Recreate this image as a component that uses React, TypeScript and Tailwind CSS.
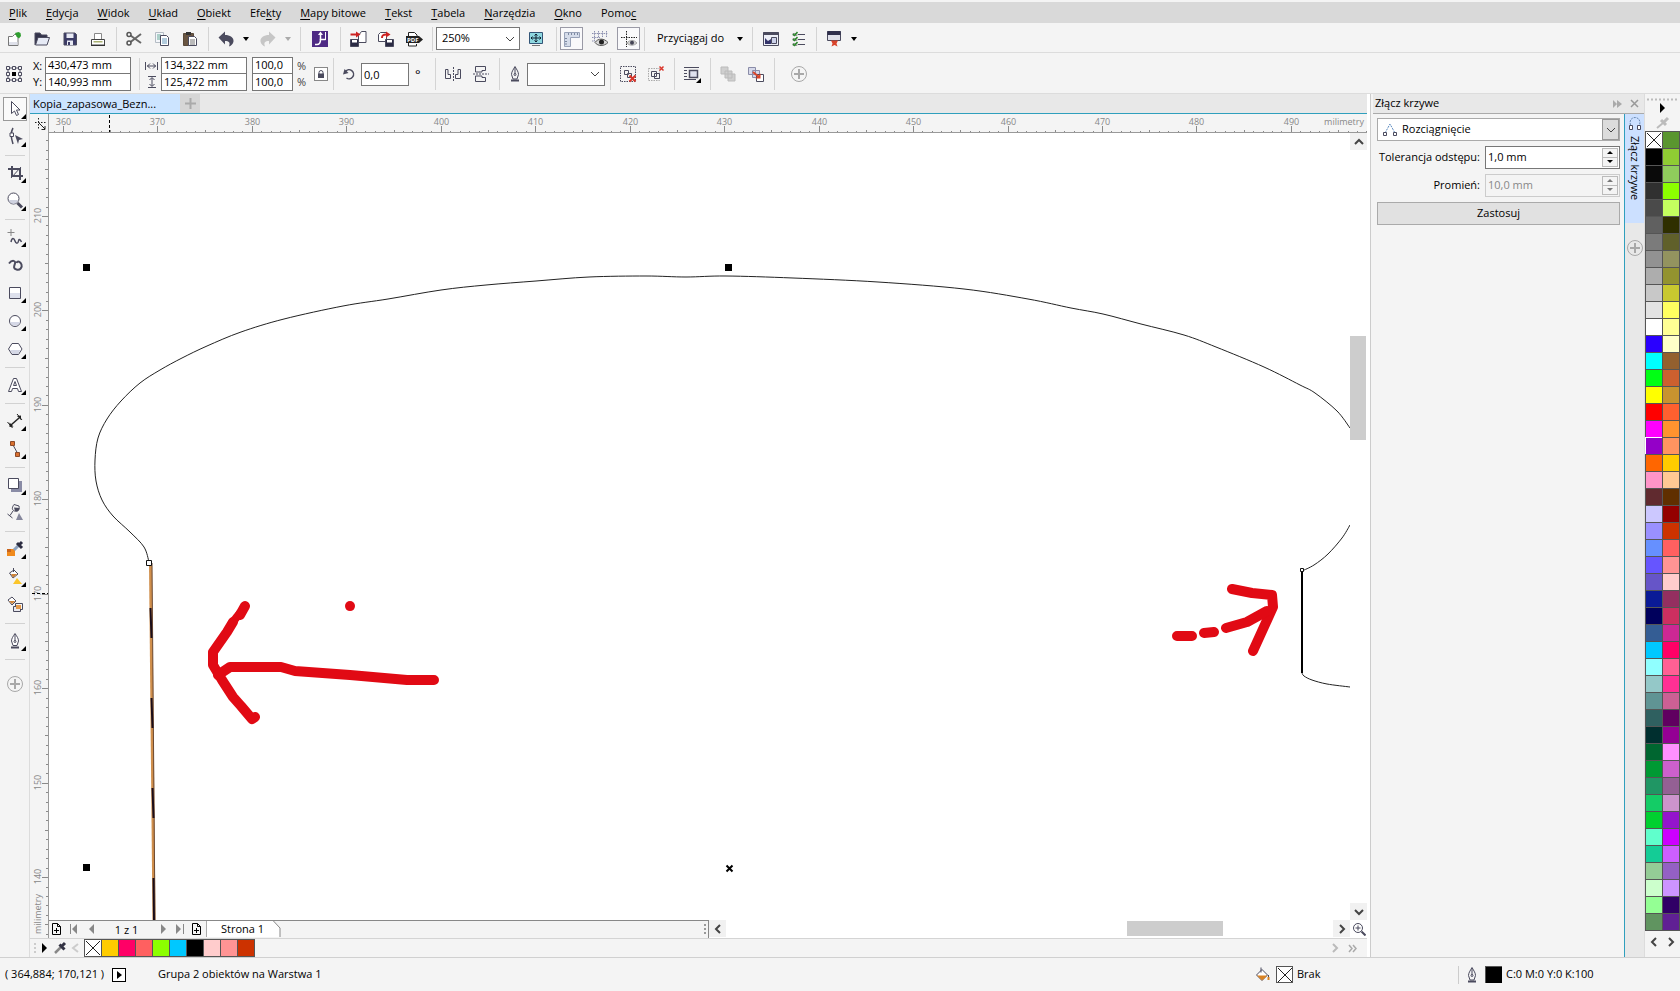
import { useState, type ReactNode } from 'react';
import clsx from 'clsx';

const INK = '#4b4b5e';

const menus = [
  ['', 'P', 'lik'],
  ['', 'E', 'dycja'],
  ['', 'W', 'idok'],
  ['', 'U', 'kład'],
  ['', 'O', 'biekt'],
  ['Efe', 'k', 'ty'],
  ['', 'M', 'apy bitowe'],
  ['', 'T', 'ekst'],
  ['', 'T', 'abela'],
  ['', 'N', 'arzędzia'],
  ['', 'O', 'kno'],
  ['Pomo', 'c', ''],
];

const paletteLeft = [
  'none', '#000000', '#0a0a0a', '#303030', '#4a4a4a', '#606060', '#7b7b7b', '#929292',
  '#adadad', '#c8c8c8', '#e3e3e3', '#ffffff', '#2a00ff', '#00ffff', '#00ff14', '#ffff00',
  '#ff0000', '#ff00ff', '#9400c8', '#ff6600', '#ff94c8', '#602a2f', '#ccc8ff', '#9a90ff',
  '#6690ff', '#6655ff', '#6655c8', '#0a1a96', '#00005c', '#345d94', '#00c8ff', '#90ffff',
  '#94c8c8', '#609494', '#2f6060', '#002f2f', '#006630', '#009933', '#209664', '#14cc66',
  '#00d030', '#60ffcc', '#14cc96', '#94cc96', '#ccffcc', '#94ff94', '#609460',
];

const paletteRight = [
  '#5a962f', '#8fcc33', '#8fcc5c', '#8cff00', '#c4ff5f', '#2f2f00', '#60602a', '#93935f',
  '#93932f', '#c8c82f', '#ffff60', '#ffff94', '#ffffc8', '#93602f', '#cc602f', '#c8932f',
  '#ff602f', '#ff932f', '#ff9460', '#ffcc00', '#ffc894', '#602f00', '#940000', '#cc3200',
  '#ff6060', '#ff9494', '#ffcccc', '#942f60', '#cc2f60', '#cc2894', '#ff0066', '#ff6094',
  '#ff3094', '#cc6094', '#600060', '#940094', '#ff90ff', '#cc60cc', '#946094', '#cc94cc',
  '#9414cc', '#cc00ff', '#cc5fff', '#9460c4', '#cc94ff', '#300066', '#602094',
];

const documentColors = [
  'none', '#ffcc00', '#ff0066', '#ff6060', '#8cff00', '#00c8ff', '#000000', '#ffcccc', '#ff9494', '#cc3200',
];

/* ---------- small building blocks ---------- */

function Icon({ children, size = 18 }: { children: ReactNode; size?: number }) {
  return (
    <svg width={size} height={size} viewBox={`0 0 ${size} ${size}`} fill="none" stroke={INK} className="shrink-0">
      {children}
    </svg>
  );
}

function IconButton({ label, width = 'w-7', children }: { label: string; width?: string; children: ReactNode }) {
  return (
    <button type="button" aria-label={label} className={clsx('flex h-6 shrink-0 items-center justify-center', width)}>
      {children}
    </button>
  );
}

function Sep({ tall = false }: { tall?: boolean }) {
  return (
    <div className="flex w-2 shrink-0 justify-center">
      <div className={clsx('w-px bg-[#d4d4d4]', tall ? 'h-8' : 'h-6')} />
    </div>
  );
}

function DropArrow({ label, faded = false }: { label: string; faded?: boolean }) {
  return (
    <button type="button" aria-label={label} className="mr-0.5 flex h-6 w-3 shrink-0 items-center justify-center">
      <svg width="6" height="4" viewBox="0 0 6 4">
        <path d="M0 0h6L3 4z" fill={faded ? '#aaa' : '#000'} />
      </svg>
    </button>
  );
}

function Chevron({ dir, color = '#444', bold = true }: { dir: 'up' | 'down' | 'left' | 'right'; color?: string; bold?: boolean }) {
  const d = {
    up: 'M1 7l4-4 4 4',
    down: 'M1 3l4 4 4-4',
    left: 'M7 1L3 5l4 4',
    right: 'M3 1l4 4-4 4',
  }[dir];
  return (
    <svg width="10" height="10" viewBox="0 0 10 10" fill="none" stroke={color} strokeWidth={bold ? 2 : 1}>
      <path d={d} />
    </svg>
  );
}

function CirclePlus() {
  return (
    <svg width="18" height="18" viewBox="0 0 18 18" fill="none" stroke="#a8a8a8">
      <circle cx="9" cy="9" r="7.5" />
      <path d="M9 4v10M4 9h10" strokeWidth="2" />
    </svg>
  );
}

function Combo({ label, value, className }: { label: string; value: string; className: string }) {
  return (
    <div className={clsx('relative shrink-0 border border-[#777] bg-white', className)}>
      <select aria-label={label} className="h-full w-full appearance-none bg-transparent pl-[5px] outline-none">
        <option>{value}</option>
      </select>
      <span className="pointer-events-none absolute inset-y-0 right-1 flex items-center">
        <Chevron dir="down" bold={false} />
      </span>
    </div>
  );
}

function Field({ label, value, className }: { label: string; value: string; className: string }) {
  return (
    <input
      aria-label={label}
      defaultValue={value}
      className={clsx('shrink-0 border border-[#777] bg-white pl-0.5 outline-none', className)}
    />
  );
}

function Swatch({ color, selected = false, className }: { color: string; selected?: boolean; className?: string }) {
  return (
    <button
      type="button"
      aria-label={color}
      style={{ backgroundColor: color === 'none' ? '#fff' : color }}
      className={clsx('block h-[17px] w-[17px] border-t border-l', selected ? 'border-white' : 'border-[#555]', className)}
    >
      {color === 'none' && (
        <svg width="16" height="16" viewBox="0 0 16 16" stroke="#222" fill="none">
          <path d="M1 1l14 14M15 1L1 15" />
        </svg>
      )}
    </button>
  );
}

function PenNib() {
  return (
    <Icon>
      <path d="M9 1.500C7 5 5.500 7 5.500 9.500L7 14h4l1.500-4.500C12.500 7 11 5 9 1.500zM9 2v7" />
      <circle cx="9" cy="9.500" r="1" />
      <path d="M5 15.500h8" strokeWidth="2" />
    </Icon>
  );
}

/* ---------- bars above the workspace ---------- */

function MenuBar() {
  return (
    <nav className="mt-0.5 flex h-[21px] shrink-0 items-center gap-px bg-[#d9d9d9]">
      {menus.map(([pre, key, post], i) => (
        <button key={i} type="button" className="px-[9px] leading-5">
          {pre}
          <span className="underline underline-offset-2">{key}</span>
          {post}
        </button>
      ))}
    </nav>
  );
}

function StandardBar() {
  return (
    <div className="flex h-[30px] shrink-0 items-center border-b border-[#dcdcdc] pt-0.5">
      <IconButton label="Nowy">
        <Icon>
          <path d="M3.500 6.500h4l2-2H13v11H3.500z" fill="#fff" stroke="#777" />
          <path d="M4 12h8.500v3H4z" fill="#dfe1ea" stroke="none" />
          <path d="M10 3l3.500-1 2 1 .5 3-2 2.500-2.500-2z" fill="#2f9e2f" stroke="none" />
        </Icon>
      </IconButton>
      <IconButton label="Otwórz">
        <Icon>
          <path d="M2 15V3h5l1.500 2H14v3" fill="#33334a" />
          <path d="M2.500 15L5 7.500h11.500L14 15z" fill="#e6eaf5" />
        </Icon>
      </IconButton>
      <IconButton label="Zapisz">
        <Icon>
          <path d="M3 3h11l1.500 1.500V15H3z" fill="#3b3b66" />
          <path d="M5.500 3.500h7V8h-7zM6 10.500h6V15H6z" fill="#e8eaf4" stroke="none" />
          <path d="M7 12h2v3H7z" fill="#3b3b66" stroke="none" />
        </Icon>
      </IconButton>
      <IconButton label="Drukuj">
        <Icon>
          <path d="M5.500 9V3.500h7V9" fill="#fff" stroke="#888" />
          <path d="M2.500 9.500h13V15h-13z" fill="#fff" stroke="#444" />
          <path d="M4.500 11h9v1.500h-9z" fill="#a8b070" stroke="none" />
          <path d="M2 15.500h14" stroke="#333" />
        </Icon>
      </IconButton>
      <Sep />
      <IconButton label="Wytnij">
        <Icon>
          <path d="M5.500 5.500L16 13M5.500 12L16 4" strokeWidth="2" stroke="#666" />
          <circle cx="4" cy="4.500" r="2" strokeWidth="1.500" stroke="#555" />
          <circle cx="4" cy="13" r="2" strokeWidth="1.500" stroke="#555" />
        </Icon>
      </IconButton>
      <IconButton label="Kopiuj">
        <Icon>
          <path d="M2.500 2.500h8v10h-8z" fill="#f4f6fa" stroke="#b4bcc4" />
          <path d="M4 5h4M4 7h3M4 9h3" stroke="#6a9" />
          <path d="M7.500 5.500h6l2 2v8h-8z" fill="#fff" />
          <path d="M9 9h5M9 11h5M9 13h5" stroke="#69b" />
        </Icon>
      </IconButton>
      <IconButton label="Wklej">
        <Icon>
          <path d="M2.500 3.500h10v12h-10z" fill="#6a5642" stroke="#5a4a3a" />
          <path d="M5 2h5v3H5z" fill="#333" stroke="none" />
          <path d="M7.500 6.500h6l2 2v7h-8z" fill="#fff" />
          <path d="M9 10h5M9 12h5M9 14h5" stroke="#777" />
        </Icon>
      </IconButton>
      <Sep />
      <IconButton label="Cofnij">
        <Icon>
          <path d="M1.500 7.500L8 1.500V5c5 0 9 2.500 8.500 6.500-.5 2.500-2 4-4.500 5 1.500-4 0-5.500-4-5.500v3.500z" fill={INK} stroke="none" />
        </Icon>
      </IconButton>
      <DropArrow label="Historia cofania" />
      <IconButton label="Ponów">
        <Icon>
          <path d="M16.500 7.500L10 1.500V5c-5 0-9 2.500-8.500 6.500.5 2.500 2 4 4.500 5-1.500-4 0-5.500 4-5.500v3.500z" fill="#c6c6c6" stroke="none" />
        </Icon>
      </IconButton>
      <DropArrow label="Historia ponawiania" faded />
      <Sep />
      <IconButton label="Wyszukaj zawartość" width="w-8">
        <Icon>
          <path d="M1 1h16v16H1z" fill="#4e2a84" stroke="none" />
          <path d="M4 14.500h2c3 0 3.500-2 3.500-5h5" stroke="#fff" strokeWidth="1.500" />
          <path d="M9.500 10V4" stroke="#fff" strokeWidth="1.500" />
          <path d="M7 5l2.500-3.500L12 5z" fill="#fff" stroke="none" />
          <path d="M14.500 2v8" stroke="#fff" />
        </Icon>
      </IconButton>
      <Sep />
      <IconButton label="Importuj">
        <Icon>
          <path d="M9.500 5.500l3-4H17v11H9.500z" fill="#fff" />
          <path d="M1.500 9.500h8v7h-8z" fill="#2b2b44" />
          <path d="M3 10h5v2.500H3z" fill="#fff" stroke="none" />
          <path d="M1.500 4.500h6" stroke="#c22" strokeWidth="2" />
          <path d="M7 1.500l4.500 3-4.500 3z" fill="#c22" stroke="none" />
        </Icon>
      </IconButton>
      <IconButton label="Eksportuj">
        <Icon>
          <path d="M1.500 4.500l2-2h6v9h-8z" fill="#fff" />
          <path d="M8.500 9.500h8v7h-8z" fill="#2b2b44" />
          <path d="M10 10h5v2.500h-5z" fill="#fff" stroke="none" />
          <path d="M5 8c0-3 1-3.500 4-3.500" stroke="#c22" strokeWidth="2" />
          <path d="M9 1.500l4.500 3-4.500 3z" fill="#c22" stroke="none" />
        </Icon>
      </IconButton>
      <IconButton label="Publikuj jako PDF">
        <Icon>
          <path d="M3.500 6V2.500h6L12 5v1M3.500 13v3h8v-2" fill="#fff" stroke="#222" />
          <path d="M1 6h13l4 3.500-4 3.500H1z" fill="#222" stroke="none" />
          <text x="2" y="12" fontSize="6" fontWeight="700" fill="#fff" stroke="none">PDF</text>
        </Icon>
      </IconButton>
      <Sep />
      <Combo label="Powiększenie" value="250%" className="h-[23px] w-[84px]" />
      <IconButton label="Podgląd pełnoekranowy" width="w-8">
        <Icon>
          <path d="M2.500 2.500h13v11h-13z" fill="#8fd8e0" stroke="#357" />
          <path d="M9 4v8M4 8h10M7.500 5.500L9 4l1.500 1.500M7.500 10.500L9 12l1.500-1.500M5.500 6.500L4 8l1.500 1.500M12.500 6.500L14 8l-1.500 1.500" stroke="#123" />
          <path d="M5 15.500h8" stroke="#777" />
        </Icon>
      </IconButton>
      <Sep />
      <button type="button" aria-label="Pokaż linijki" className="flex h-[23px] w-[23px] shrink-0 items-center justify-center border border-[#9a9aa6] bg-[#f9f9fb]">
        <Icon>
          <path d="M1.500 2.500h15v5h-9v9h-6z" fill="#d5dcea" stroke="#98a2b8" />
          <path d="M5.500 3v2M8.500 3v2M11.500 3v2M14.500 3v2M2 8.500h2M2 11.500h2M2 14h2" stroke="#7c88a0" />
        </Icon>
      </button>
      <IconButton label="Pokaż siatkę" width="w-[34px]">
        <Icon>
          <path d="M3.500 1v10M7.500 1v7M11.500 1v6M15.500 1v6M1 3.500h16M1 7.500h8M1 11h3" stroke="#8c90b0" strokeDasharray="1.500 .8" />
          <path d="M4 12.500c3-4.500 9-4.500 13 0-4 4-10 4-13 0z" fill="#d8d8d8" stroke="#555" />
          <circle cx="10.500" cy="12" r="2.500" fill="#222" stroke="none" />
        </Icon>
      </IconButton>
      <button type="button" aria-label="Pokaż prowadnice" className="flex h-[23px] w-[23px] shrink-0 items-center justify-center border border-[#9a9aa6] bg-[#f9f9fb]">
        <Icon>
          <path d="M6.500 1v16M1 7.500h16" stroke="#222" strokeDasharray="1.500 1" />
          <path d="M7 13c2.500-3.500 7-3.500 10 0-3 3-7.500 3-10 0z" fill="#d0d0d0" stroke="#aaa" />
          <circle cx="12" cy="12.800" r="2" fill="#445" stroke="none" />
        </Icon>
      </button>
      <Sep />
      <button type="button" className="ml-1.5 w-20 shrink-0 pl-[3px] text-left whitespace-nowrap">Przyciągaj do</button>
      <DropArrow label="Opcje przyciągania" />
      <Sep />
      <IconButton label="Ekran powitalny" width="w-[30px]">
        <Icon>
          <path d="M1.500 2.500h15v13h-15z" fill="#eef0f8" />
          <path d="M1.500 3.500h15" strokeWidth="3" />
          <path d="M3 14V8l3 3 3-2v5z" fill="#34346a" stroke="none" />
          <path d="M9.500 7.500h5v6h-5z" fill="#cdd2ea" />
        </Icon>
      </IconButton>
      <IconButton label="Opcje" width="w-[26px]">
        <Icon>
          <path d="M8 4.500h7M8 9.500h7M8 14.500h7" />
          <path d="M3 3.500h4v2H3zM3 8.500h4v2H3zM3 13.500h4v2H3z" stroke="#999" />
          <path d="M3 4l1.500 1.500L7.500 2M3 9l1.500 1.500L7.500 7M3 14l1.500 1.500 3-3.500" stroke="#2b8a2b" strokeWidth="1.500" />
        </Icon>
      </IconButton>
      <Sep />
      <IconButton label="Uruchamianie aplikacji">
        <Icon>
          <path d="M2.500 1.500h13v9h-13z" fill="#dfe0ea" />
          <path d="M2.500 3h13" strokeWidth="4" stroke="#2f2f4c" />
          <path d="M6 10.500h7l-1.500 3 1 3-3-1.500-3 1.500 1-3z" fill="#d9432a" stroke="none" />
        </Icon>
      </IconButton>
      <DropArrow label="Lista aplikacji" />
    </div>
  );
}

function PropertyBar() {
  return (
    <div className="flex h-[41px] shrink-0 items-center border-b border-[#dcdcdc] pt-0.5">
      <IconButton label="Początek obiektu">
        <Icon>
          {[3, 9, 15].map((y) =>
            [3, 9, 15].map((x) =>
              x === 9 && y === 9 ? (
                <path key="c" d="M7 7h4v4H7z" fill="#000" stroke="none" />
              ) : (
                <path key={`${x}-${y}`} d={`M${x - 1.5} ${y - 1.5}h3v3h-3z`} />
              ),
            ),
          )}
          <path d="M5 3h2M11 3h2M5 15h2M11 15h2M3 5v2M3 11v2M15 5v2M15 11v2" />
        </Icon>
      </IconButton>
      <div className="ml-[5px] grid w-3 shrink-0 leading-4">
        <label htmlFor="pos-x">X:</label>
        <label htmlFor="pos-y">Y:</label>
      </div>
      <div className="grid w-[86px] shrink-0 border border-[#777] bg-white">
        <input id="pos-x" defaultValue="430,473 mm" className="h-4 w-full border-b border-[#777] pl-0.5 outline-none" />
        <input id="pos-y" defaultValue="140,993 mm" className="h-4 w-full pl-0.5 outline-none" />
      </div>
      <div className="ml-1">
        <Sep tall />
      </div>
      <div className="ml-px grid w-[15px] shrink-0 justify-items-center">
        <svg width="13" height="16" viewBox="0 0 13 16" fill="none" stroke={INK}>
          <path d="M.5 4v8M12.500 4v8M2 8h9M5 5.500L2.500 8 5 10.500M8 5.500L10.500 8 8 10.500" />
        </svg>
        <svg width="13" height="16" viewBox="0 0 13 16" fill="none" stroke={INK}>
          <path d="M3 2.500h8M3 13.500h8M7 4v8M4.500 6L7 3.500 9.500 6M4.500 10L7 12.500 9.500 10" />
        </svg>
      </div>
      <div className="ml-0.5 grid w-[86px] shrink-0 border border-[#777] bg-white">
        <input aria-label="Szerokość obiektu" defaultValue="134,322 mm" className="h-4 w-full border-b border-[#777] pl-0.5 outline-none" />
        <input aria-label="Wysokość obiektu" defaultValue="125,472 mm" className="h-4 w-full pl-0.5 outline-none" />
      </div>
      <div className="ml-[5px] grid w-[41px] shrink-0 border border-[#777] bg-white">
        <input aria-label="Skala pozioma" defaultValue="100,0" className="h-4 w-full border-b border-[#777] pl-0.5 outline-none" />
        <input aria-label="Skala pionowa" defaultValue="100,0" className="h-4 w-full pl-0.5 outline-none" />
      </div>
      <div className="ml-1 grid w-3 shrink-0 leading-4 text-[#444]">
        <span>%</span>
        <span>%</span>
      </div>
      <button type="button" aria-label="Zablokuj proporcje" className="ml-[5px] flex h-3.5 w-3.5 shrink-0 items-center justify-center border border-[#888] bg-white">
        <svg width="8" height="8" viewBox="0 0 8 8" fill="none" stroke={INK}>
          <path d="M2 4V2.500a2 2 0 0 1 4 0V4" />
          <path d="M1 3.500h6V8H1z" fill={INK} stroke="none" />
        </svg>
      </button>
      <div className="ml-px">
        <Sep tall />
      </div>
      <div className="flex w-6 shrink-0 justify-center">
        <Icon size={14}>
          <path d="M3.500 4.500a4.500 4.500 0 1 1 1 6.500" strokeWidth="1.500" />
          <path d="M1 7.500L2.500 2l4 4z" fill={INK} stroke="none" />
        </Icon>
      </div>
      <Field label="Kąt obrotu" value="0,0" className="h-[23px] w-12" />
      <span className="w-[22px] shrink-0 pl-1.5 text-[13px] leading-6">°</span>
      <Sep tall />
      <IconButton label="Odbij w poziomie">
        <Icon>
          <path d="M1.500 4.500H4v5h2.500v4h-5zM16.500 4.500H14v5h-2.500v4h5z" />
          <path d="M9.500 2v14" strokeDasharray="2 1" />
        </Icon>
      </IconButton>
      <IconButton label="Odbij w pionie">
        <Icon>
          <path d="M3.500 1.500h10v4H10v1.500H3.500zM3.500 16.500h10v-4H10V11H3.500z" />
          <path d="M1 9h16" strokeDasharray="2 1" />
        </Icon>
      </IconButton>
      <Sep tall />
      <div className="flex w-6 shrink-0 justify-center">
        <PenNib />
      </div>
      <Combo label="Szerokość konturu" value="" className="h-[23px] w-[78px]" />
      <div className="ml-px">
        <Sep tall />
      </div>
      <IconButton label="Rozgrupuj obiekty">
        <Icon>
          <path d="M1.500 1.500h15v15h-15z" strokeDasharray="1.500 1" />
          <path d="M5.500 5.500h4v4h-4zM8.500 8.500h4v4h-4z" />
          <path d="M10.500 10.500l6 6M16.500 10.500l-6 6" stroke="#d9352a" strokeWidth="2" />
        </Icon>
      </IconButton>
      <IconButton label="Rozgrupuj wszystkie">
        <Icon>
          <path d="M1.500 3.500h11v12h-11z" stroke="#aaa" strokeDasharray="1.500 1" />
          <path d="M4.500 6.500h5v5h-5zM7.500 8.500h5v5h-5z" />
          <path d="M12.500 1.500l4 4M16.500 1.500l-4 4" stroke="#d9352a" strokeWidth="1.500" />
        </Icon>
      </IconButton>
      <Sep tall />
      <IconButton label="Zawijaj tekst">
        <Icon>
          <path d="M1 2.500h15M1 5.500h3M1 8.500h3M1 11.500h3M1 14.500h12" />
          <path d="M6.500 5.500h8v7h-8z" strokeWidth="1.500" fill="#dfe1ee" />
          <path d="M18 13v5h-5z" fill="#000" stroke="none" />
        </Icon>
      </IconButton>
      <Sep tall />
      <IconButton label="Na wierzch">
        <Icon>
          <path d="M2 2h7v7H2zM6 6h7v7H6zM9 9h7v7H9z" fill="#cfcfcf" stroke="#bbb" />
        </Icon>
      </IconButton>
      <IconButton label="Na spód">
        <Icon>
          <path d="M1.500 2.500h7v7h-7zM5.500 5.500h7v7h-7z" fill="#d6d9ea" stroke="#8a8ca8" />
          <path d="M9.500 9.500h7v7h-7z" fill="#fff" />
          <path d="M6 7l6 5" stroke="#d9452a" strokeWidth="2" />
          <path d="M8.500 13.500h5v-5z" fill="#d9452a" stroke="none" />
        </Icon>
      </IconButton>
      <Sep tall />
      <button type="button" aria-label="Dostosuj pasek" className="ml-3">
        <CirclePlus />
      </button>
    </div>
  );
}

/* ---------- toolbox ---------- */

const tools: { label: string; flyout?: boolean; art: ReactNode }[][] = [
  [
    { label: 'Wskaźnik', flyout: true, art: <path d="M8.500 4.500v12l3-2.500 2 4.500 2-1-2-4.500h3.500z" fill="#fff" /> },
    {
      label: 'Kształt',
      flyout: true,
      art: (
        <>
          <path d="M10 3c-3 5-2 10 0 16" strokeWidth="1.500" />
          <path d="M7 8h3.500v3.500H7z" fill="#fff" />
          <path d="M12 10l8 4-4 1-1 4z" fill={INK} stroke="none" />
        </>
      ),
    },
  ],
  [
    { label: 'Kadrowanie', flyout: true, art: <><path d="M9 5v10h11M5 8h12v11" strokeWidth="2" /><path d="M8 17L18 6" /></> },
    {
      label: 'Zoom',
      flyout: true,
      art: (
        <>
          <circle cx="10.500" cy="9.500" r="5.500" fill="#fff" />
          <path d="M6 11h9c-1 5-8 5-9 0z" fill="#cfd2e0" stroke="none" />
          <path d="M14.500 14l4.500 4.500" strokeWidth="3" />
        </>
      ),
    },
  ],
  [
    { label: 'Krzywa', flyout: true, art: <><path d="M8 4v7M4.500 7.500h7" stroke="#888" /><path d="M8 17c1-5 3-4 4-1s3 3 3.500 0 2-1 3 1" strokeWidth="1.500" /></> },
    { label: 'Środki artystyczne', art: <><path d="M6 10.500c3-4 7-3 6 0s-2 5 1.500 6 6-2 5-5-4-4-5-1.500" strokeWidth="2" /></> },
    { label: 'Prostokąt', flyout: true, art: <><path d="M6.500 6.500h11v11h-11z" fill="#fff" /><path d="M7 12h10v5H7z" fill="#dde0ec" stroke="none" /></> },
    { label: 'Elipsa', flyout: true, art: <><circle cx="12" cy="12" r="5.500" fill="#fff" /><path d="M7 13h10c-1 5-9 5-10 0z" fill="#d5d8e6" stroke="none" /></> },
    { label: 'Wielokąt', flyout: true, art: <><path d="M5.500 12L9 6.500h6.500L19 12l-3.500 5.500H9z" fill="#fff" /><path d="M7 13h10.500L15 17H9.500z" fill="#d5d8e6" stroke="none" /></> },
  ],
  [
    {
      label: 'Tekst',
      flyout: true,
      art: <path d="M5.500 18.500L10.500 5.500h3l5 13h-3l-1-3h-5l-1 3zM10.500 12.500h3L12 8.500z" fill="#fff" />,
    },
  ],
  [
    { label: 'Wymiar', flyout: true, art: <><path d="M8 16l8-7" strokeWidth="1.500" stroke="#222" /><path d="M4.500 13l5 6M14 5l5 6" stroke="#222" /><path d="M6.500 18v-4.500l4 4zM18 6.500V11l-4-4z" fill="#222" stroke="none" /></> },
    { label: 'Łącznik', flyout: true, art: <><path d="M10 8l5 9" /><path d="M7.500 4.500h4v4h-4zM12.500 15.500h4v4h-4z" fill="#d9702f" stroke="#8a4a2a" /></> },
  ],
  [
    { label: 'Cień', flyout: true, art: <><path d="M8 8h11v11H8z" fill="#8a8ca6" stroke="none" /><path d="M5.500 5.500h10v10h-10z" fill="#fff" /></> },
    { label: 'Przezroczystość', art: <><path d="M11 3.500l5 1.500c1 4-2 6-4.500 5s-3-3-.5-6.500zM10 10l-3 4.500M4.500 13l5 4" /><path d="M11 6.500l5.500.5c0 3-2 4-4.500 3z" fill={INK} stroke="none" /><path d="M16 12l4 7h-7z" fill="#85879c" stroke="none" /></> },
  ],
  [
    { label: 'Próbnik koloru', flyout: true, art: <><path d="M4 12h8v7H4z" fill="#f08a1c" stroke="none" /><path d="M4 12h4v3H4z" fill="#c8641c" stroke="none" /><path d="M11 13l5-5" strokeWidth="3" stroke="#8ca0bc" /><path d="M14 6l5 5M15 9l4-4" strokeWidth="3" stroke="#2c2c40" /></> },
    { label: 'Wypełnienie interakcyjne', flyout: true, art: <><path d="M6.500 8L11 5l4 4-5 4z" fill="#fff" /><path d="M8 9h6.500L10 12.500z" fill="#d08438" stroke="none" /><path d="M10.500 3v4" /><path d="M14 13l5 6h-9z" fill="#fbc52a" stroke="none" /></> },
    { label: 'Wypełnienie inteligentne', art: <><path d="M5 7l4-3 4 4-4 4z" fill="#fff" /><path d="M6 8h6.500L9 11z" fill="#d08438" stroke="none" /><path d="M12.500 10.500h7v6h-7z" /><path d="M10.500 13.500h7v5h-7z" fill="#e8e8ee" /><path d="M13 12h5v4h-5z" fill="#e59a4a" stroke="none" /></> },
  ],
  [
    { label: 'Pióro konturu', flyout: true, art: <><path d="M12 4.500c-2 3-3.500 5-3.500 7.500l1.500 4.500h4l1.500-4.500c0-2.500-1.500-4.500-3.500-7.500zM12 5v7" fill="#fff" /><circle cx="12" cy="12.500" r="1" /><path d="M8 18.500h8" strokeWidth="2" /></> },
  ],
];

function Toolbox() {
  const [active, setActive] = useState('Wskaźnik');
  return (
    <aside className="flex w-[30px] shrink-0 flex-col items-center border-r border-[#dcdcdc] pt-px">
      {tools.map((group, i) => (
        <div key={i} className="w-full">
          {group.map((tool) => (
            <div key={tool.label} className="flex h-7 items-center justify-center">
              <button
                type="button"
                aria-label={tool.label}
                onClick={() => setActive(tool.label)}
                className={clsx('border', active === tool.label ? 'border-[#999] bg-[#fafafa]' : 'border-transparent')}
              >
                <svg width="22" height="22" viewBox="1 1 22 22" fill="none" stroke={INK}>
                  {tool.art}
                  {tool.flyout && <path d="M23 17v5h-5z" fill="#000" stroke="none" />}
                </svg>
              </button>
            </div>
          ))}
          <div className="flex h-2 items-center justify-center">
            <div className="h-px w-5 bg-[#d2d2d2]" />
          </div>
        </div>
      ))}
      <button type="button" aria-label="Dostosuj przybornik" className="mt-3">
        <CirclePlus />
      </button>
    </aside>
  );
}

/* ---------- rulers ---------- */

const MM = 9.445;
const range = (from: number, to: number) => Array.from({ length: to - from + 1 }, (_, i) => from + i);

function HorizontalRuler() {
  const x = (mm: number) => Math.round(14.5 + (mm - 360) * MM - 0.5) + 0.5;
  return (
    <svg className="h-[18px] min-w-0 flex-1" stroke="#8a8a8a">
      {range(359, 700).map((mm) => (
        <path key={mm} d={`M${x(mm)} ${mm % 10 === 0 ? 12 : mm % 5 === 0 ? 16 : 17}V18`} />
      ))}
      {range(36, 49).map((n) => (
        <text key={n} x={x(n * 10)} y="11" textAnchor="middle" fontSize="9" fill="#888" stroke="none">
          {n * 10}
        </text>
      ))}
      <path d="M60.500 1v17" stroke="#000" strokeDasharray="3 2" />
      <text x="100%" dx="-3" y="11" textAnchor="end" fontSize="9" fill="#888" stroke="none">
        milimetry
      </text>
    </svg>
  );
}

function VerticalRuler() {
  const y = (mm: number) => Math.round(83.5 + (210 - mm) * MM - 0.5) + 0.5;
  return (
    <svg className="min-h-0 w-[18px] flex-1" stroke="#8a8a8a">
      {range(134, 218).map((mm) => (
        <path key={mm} d={`M${mm % 10 === 0 ? 12 : mm % 5 === 0 ? 15 : 16} ${y(mm)}H18`} />
      ))}
      {range(14, 21).map((n) => (
        <text
          key={n}
          transform={`translate(11 ${y(n * 10) - 1}) rotate(-90)`}
          textAnchor="middle"
          fontSize="9"
          fill="#888"
          stroke="none"
        >
          {n * 10}
        </text>
      ))}
      <path d="M2 460.500h16" stroke="#000" strokeDasharray="3 2" />
      <text transform="translate(11 801) rotate(-90)" fontSize="9" fill="#888" stroke="none">
        milimetry
      </text>
    </svg>
  );
}

/* ---------- drawing ---------- */

type Point = [number, number];

// Catmull-Rom spline through all points
function smooth(points: Point[]) {
  let d = `M${points[0][0]} ${points[0][1]}`;
  for (let i = 0; i < points.length - 1; i++) {
    const p0 = points[Math.max(i - 1, 0)];
    const p1 = points[i];
    const p2 = points[i + 1];
    const p3 = points[Math.min(i + 2, points.length - 1)];
    d += `C${p1[0] + (p2[0] - p0[0]) / 6} ${p1[1] + (p2[1] - p0[1]) / 6} ${p2[0] - (p3[0] - p1[0]) / 6} ${p2[1] - (p3[1] - p1[1]) / 6} ${p2[0]} ${p2[1]}`;
  }
  return d;
}

const headOutline: Point[] = [
  [149, 562], [144, 547], [130, 532], [113, 516], [102, 500], [96, 481], [95, 460], [98, 438], [107, 419],
  [121, 401], [140, 383], [160, 370], [182, 358], [207, 346], [241, 332], [284, 319], [343, 306], [388, 299],
  [441, 290], [486, 285], [536, 281], [589, 277], [646, 276], [686, 277], [726, 276], [793, 278], [878, 282],
  [964, 289], [1028, 299], [1071, 308], [1103, 314], [1141, 324], [1184, 335], [1216, 347], [1264, 367],
  [1300, 385], [1315, 393], [1337, 411], [1350, 428],
];

function Artwork() {
  return (
    <svg className="min-h-0 min-w-0 flex-1" fill="none">
      <g transform="translate(-49 -133)">
        <g stroke="#222">
          <path d={smooth(headOutline)} />
          <path d={smooth([[1350, 525], [1342, 538], [1328, 554], [1314, 565], [1302, 571]])} />
          <path d="M1302 571V673" strokeWidth="2" stroke="#000" />
          <path d={smooth([[1302, 673], [1304, 676], [1312, 680], [1327, 684], [1350, 687]])} />
        </g>

        <path d="M150.500 563L154 921" stroke="#d08f4c" strokeWidth="3" />
        <path d="M152 563L155 921" stroke="#6b4a34" />
        <path d="M150.500 608l1 30M151.500 698l1 30M152.500 788l1 30M153.500 878l.5 43" stroke="#1a0d1a" strokeWidth="2" />

        <path d="M83 264h7v7h-7zM725 264h7v7h-7zM83 864h7v7h-7z" fill="#000" />
        <path d="M726.500 865.500l6 6M732.500 865.500l-6 6" stroke="#000" strokeWidth="2" />
        <path d="M146.500 560.500h5v5h-5zM1300.500 568.500h3v3h-3z" fill="#fff" stroke="#111" />

        <g stroke="#e10a14" strokeWidth="10" strokeLinecap="round" strokeLinejoin="round">
          <path d="M245 606L240 615M233 622L227 632L213 652L213 665L222 680L233 697L241 706L252 719L255 717" />
          <path d="M240 613L232 623" strokeWidth="8" />
          <path d="M218 675L230 667H281L295 671L350 675L407 680H434" />
          <path d="M1232 589L1252 593L1272 595L1273 607L1253 651" />
          <path d="M1226 628L1247 622L1267 611M1204 633L1214 632M1177 636H1192" />
          <path d="M350 606v.1" />
        </g>
      </g>
    </svg>
  );
}

function ScrollButton({ label, dir }: { label: string; dir: 'up' | 'down' | 'left' | 'right' }) {
  return (
    <button type="button" aria-label={label} className="flex h-[17px] w-[17px] shrink-0 items-center justify-center bg-[#f1f1f1]">
      <Chevron dir={dir} />
    </button>
  );
}

function PageNavigator() {
  const addPage = (
    <Icon size={14}>
      <path d="M3.500 1.500h5l3 3v8h-8zM8.500 1.500v3h3M7.500 6v5M5 8.500h5" stroke="#000" />
    </Icon>
  );
  return (
    <div className="flex h-[18px] w-[660px] shrink-0 items-center border-t border-r border-[#888] pb-px">
      <button type="button" aria-label="Dodaj stronę przed">{addPage}</button>
      <button type="button" aria-label="Pierwsza strona" className="ml-[7px]">
        <svg width="8" height="10" viewBox="0 0 8 10"><path d="M0 0h1v10H0zM7 0v10L2 5z" fill="#888" /></svg>
      </button>
      <button type="button" aria-label="Poprzednia strona" className="ml-[11px]">
        <svg width="6" height="10" viewBox="0 0 6 10"><path d="M5 0v10L0 5z" fill="#888" /></svg>
      </button>
      <span className="w-[65px] pt-px pr-0.5 text-center leading-4">1 z 1</span>
      <button type="button" aria-label="Następna strona">
        <svg width="6" height="10" viewBox="0 0 6 10"><path d="M1 0v10l5-5z" fill="#888" /></svg>
      </button>
      <button type="button" aria-label="Ostatnia strona" className="ml-2.5">
        <svg width="8" height="10" viewBox="0 0 8 10"><path d="M7 0h1v10H7zM0 0v10l5-5z" fill="#888" /></svg>
      </button>
      <button type="button" aria-label="Dodaj stronę po" className="ml-[5px]">{addPage}</button>
      <button type="button" className="ml-[3px] flex h-4 items-center border-l border-[#aaa] bg-white pl-3.5 leading-4">
        Strona 1
        <svg width="18" height="16" viewBox="0 0 18 16" className="ml-1.5" stroke="#888" fill="#f4f4f4">
          <path d="M2.500-1L10 7v11h9V-1z" />
        </svg>
      </button>
      <svg width="4" height="14" className="ml-auto" fill="#999">
        <path d="M0 2h2v2H0zM0 6h2v2H0zM0 10h2v2H0z" />
      </svg>
    </div>
  );
}

function Workspace() {
  return (
    <main className="flex min-w-0 flex-1 flex-col">
      <div className="flex h-5 shrink-0 border-b border-[#2f9fbd] bg-[#e8e8e8]">
        <button type="button" className="w-[150px] bg-[#cce4ff] pl-[3px] text-left leading-[19px]">
          Kopia_zapasowa_Bezn...
        </button>
        <button type="button" aria-label="Nowy dokument" className="flex w-5 items-center justify-center bg-[#d6d6d6]">
          <svg width="11" height="11" stroke="#aaa" strokeWidth="2"><path d="M5.500 0v11M0 5.500h11" /></svg>
        </button>
      </div>

      <div className="flex min-h-0 flex-1">
        <div className="flex w-[19px] shrink-0 flex-col border-r border-[#999]">
          <svg width="18" height="19" viewBox="0 0 18 19" fill="none" stroke="#222" className="shrink-0">
            <path d="M8.500 4v12M5 8.500h12" strokeDasharray="1.500 1.500" />
            <path d="M9 9l6 6M15 12v3.500h-3.500" />
          </svg>
          <VerticalRuler />
        </div>
        <div className="flex min-w-0 flex-1 flex-col">
          <div className="flex h-[19px] shrink-0 border-b border-[#999]">
            <HorizontalRuler />
          </div>
          <div className="flex min-h-0 flex-1 bg-white">
            <Artwork />
            <div className="flex w-[17px] shrink-0 flex-col">
              <ScrollButton label="Przewiń w górę" dir="up" />
              <div className="grow-[186]" />
              <div className="mr-px grow-[104] bg-[#cdcdcd]" />
              <div className="grow-[463]" />
              <ScrollButton label="Przewiń w dół" dir="down" />
            </div>
          </div>
          <div className="flex h-[18px] shrink-0 bg-white">
            <div className="flex bg-[#f4f4f4]">
              <PageNavigator />
            </div>
            <ScrollButton label="Przewiń w lewo" dir="left" />
            <div className="grow-[401]" />
            <div className="mt-px mb-0.5 grow-[96] bg-[#cdcdcd]" />
            <div className="grow-[110]" />
            <ScrollButton label="Przewiń w prawo" dir="right" />
            <button type="button" aria-label="Nawigator" className="flex w-[17px] items-center justify-center">
              <Icon size={14}>
                <circle cx="6" cy="6" r="4.500" />
                <path d="M6 3.500v5M3.500 6h5" />
                <path d="M9.500 9.500l4 4" strokeWidth="2" />
              </Icon>
            </button>
          </div>
        </div>
      </div>

      <div className="flex h-[19px] shrink-0 items-center border-t border-[#d4d4d4]">
        <svg width="54" height="18" viewBox="0 0 54 18">
          <path d="M4 4h2v2H4zM4 8h2v2H4zM4 12h2v2H4z" fill="#ccc" />
          <path d="M12 4v10l5-5z" fill="#000" />
          <path d="M25 14l6-6" stroke="#888" strokeWidth="2.500" />
          <path d="M29.500 5.500l5 5M31 8l4-4" stroke="#333344" strokeWidth="3" />
          <path d="M48 5l-5 4 5 4" stroke="#ccc" strokeWidth="2" fill="none" />
        </svg>
        <div className="flex border-r border-b border-[#555]">
          {documentColors.map((c) => (
            <Swatch key={c} color={c} />
          ))}
        </div>
        <div className="mr-2.5 ml-auto flex items-center gap-2">
          <Chevron dir="right" color="#bbb" />
          <svg width="9" height="9" viewBox="0 0 9 9" fill="none" stroke="#aaa" strokeWidth="1.500">
            <path d="M1 1l3 3.500L1 8M5 1l3 3.500L5 8" />
          </svg>
        </div>
      </div>
    </main>
  );
}

/* ---------- docker ---------- */

function Spinner({ id, value, disabled = false }: { id: string; value: string; disabled?: boolean }) {
  const fill = disabled ? '#777' : '#000';
  return (
    <div className={clsx('flex h-[23px] w-[135px] shrink-0 border p-px', disabled ? 'border-[#ccc]' : 'border-[#777] bg-white')}>
      <input
        id={id}
        defaultValue={value}
        disabled={disabled}
        className="min-w-0 flex-1 bg-transparent pl-px outline-none disabled:text-[#888]"
      />
      <div className="grid w-4 grid-rows-2 border border-[#bbb] bg-[#f4f4f4]">
        <button type="button" aria-label="Zwiększ" disabled={disabled} className="flex items-center justify-center border-b border-[#bbb]">
          <svg width="6" height="3"><path d="M0 3h6L3 0z" fill={fill} /></svg>
        </button>
        <button type="button" aria-label="Zmniejsz" disabled={disabled} className="flex items-center justify-center">
          <svg width="6" height="3"><path d="M0 0h6L3 3z" fill={fill} /></svg>
        </button>
      </div>
    </div>
  );
}

function Docker() {
  return (
    <section className="flex w-[271px] shrink-0 flex-col">
      <header className="flex h-5 shrink-0 items-center border-b border-[#aaa] bg-[#e8e8e8] pl-0.5">
        Złącz krzywe
        <button type="button" aria-label="Zwiń" className="ml-auto">
          <svg width="9" height="8" fill="#aaa"><path d="M0 0l4 4-4 4zM4 0l5 4-5 4z" /></svg>
        </button>
        <button type="button" aria-label="Zamknij" className="mr-[5px] ml-2">
          <svg width="9" height="9" stroke="#999" strokeWidth="1.500"><path d="M1 1l7 7M8 1L1 8" /></svg>
        </button>
      </header>
      <div className="flex min-h-0 flex-1">
        <form className="flex min-w-0 flex-1 flex-col gap-[5px] px-1 pt-1" onSubmit={(e) => e.preventDefault()}>
          <div className="relative h-[23px] border border-[#aaa] bg-white">
            <span className="pointer-events-none absolute inset-y-0 left-1 flex items-center">
              <Icon size={16}>
                <path d="M3 11L8 2l5 9" stroke="#5a8ac0" strokeDasharray="2 1" />
                <path d="M1.500 10.500h3v3h-3zM11.500 10.500h3v3h-3z" fill="#fff" />
              </Icon>
            </span>
            <select aria-label="Tryb łączenia" className="h-full w-full appearance-none bg-transparent pl-6 outline-none">
              <option>Rozciągnięcie</option>
            </select>
            <span className="pointer-events-none absolute inset-y-0 right-0 flex w-[17px] items-center justify-center border border-[#999] bg-[#dcdcdc]">
              <Chevron dir="down" bold={false} />
            </span>
          </div>
          <div className="flex items-center justify-end gap-[5px]">
            <label htmlFor="gap" className="whitespace-nowrap">Tolerancja odstępu:</label>
            <Spinner id="gap" value="1,0 mm" />
          </div>
          <div className="flex items-center justify-end gap-[5px]">
            <label htmlFor="radius">Promień:</label>
            <Spinner id="radius" value="10,0 mm" disabled />
          </div>
          <button type="submit" className="h-[23px] border border-[#aaa] bg-[#e1e1e1]">Zastosuj</button>
        </form>
        <div className="flex w-5 flex-col items-center border-l border-[#2f9fbd] bg-[#e8e8e8]">
          <button type="button" className="flex h-[109px] w-full flex-col items-center bg-[#cce0ff] pt-0.5">
            <Icon size={16}>
              <path d="M3.500 9C2 4 5 1.500 8 1.500S14 4 12.500 9" stroke="#6a8ab4" strokeDasharray="2 1" />
              <path d="M2.500 9.500h3v4h-3zM10.500 9.500h3v4h-3z" fill="#fff" />
            </Icon>
            <span className="mt-1 leading-4 whitespace-nowrap [writing-mode:vertical-rl]">Złącz krzywe</span>
          </button>
          <button type="button" aria-label="Dodaj okno dokowane" className="mt-4">
            <CirclePlus />
          </button>
        </div>
      </div>
    </section>
  );
}

function ColorPalette() {
  return (
    <aside className="flex w-9 shrink-0 flex-col border-l border-[#dcdcdc]">
      <svg width="35" height="37" viewBox="0 0 35 37" className="shrink-0">
        <path d="M2 5.500h31" stroke="#bbb" strokeWidth="2" strokeDasharray="2 2" />
        <path d="M15 9v10l5-5z" fill="#000" />
        <path d="M12 34l6-5" stroke="#bbb" strokeWidth="2" />
        <path d="M16 26l5 5M18 29l5-5" stroke="#bbb" strokeWidth="3" />
      </svg>
      <div className="flex">
        <div className="border-b border-[#555]">
          {paletteLeft.map((c, i) => (
            <Swatch key={i} color={c} selected={i === 18} />
          ))}
        </div>
        <div className="border-r border-b border-[#555]">
          {paletteRight.map((c, i) => (
            <Swatch key={i} color={c} />
          ))}
        </div>
      </div>
      <div className="mt-1.5 flex justify-around">
        <button type="button" aria-label="Poprzednie kolory"><Chevron dir="left" /></button>
        <button type="button" aria-label="Następne kolory"><Chevron dir="right" /></button>
      </div>
    </aside>
  );
}

function StatusBar() {
  return (
    <footer className="flex h-[34px] shrink-0 items-center border-t border-[#d0d0d0] bg-[#f4f4f4]">
      <span className="w-[112px] shrink-0 pl-[5px] whitespace-nowrap">( 364,884; 170,121 )</span>
      <button type="button" aria-label="Ustawienia kursora" className="flex h-3.5 w-3.5 items-center justify-center border border-black bg-white">
        <svg width="5" height="8"><path d="M0 0v8l5-4z" /></svg>
      </button>
      <span className="ml-8">Grupa 2 obiektów na Warstwa 1</span>
      <div className="ml-auto flex w-[205px] items-center border-r border-[#ccc]">
        <Icon>
          <path d="M2.500 9L8 3.500 13.500 9 8 14.500z" fill="#fff" />
          <path d="M3 9.500h10.500L8 14.500z" fill="#d98324" stroke="none" />
          <path d="M7 1.500v5M14.500 9v3" />
          <path d="M13.500 11h2v3h-2z" fill="#d98324" stroke="none" />
        </Icon>
        <Swatch color="none" className="ml-1 border-r border-b" />
        <span className="ml-1">Brak</span>
      </div>
      <div className="flex w-[221px] items-center pl-1">
        <PenNib />
        <Swatch color="#000000" className="ml-1" />
        <span className="ml-1">C:0 M:0 Y:0 K:100</span>
      </div>
    </footer>
  );
}

export default function App() {
  return (
    <div className="flex h-screen flex-col overflow-hidden bg-[#f4f4f4] font-['Open_Sans','Noto_Sans',sans-serif] text-[11px] text-black">
      <MenuBar />
      <StandardBar />
      <PropertyBar />
      <div className="flex min-h-0 flex-1">
        <Toolbox />
        <Workspace />
        <div className="mr-0.5 w-1 shrink-0 border-r border-[#ccc] bg-white" />
        <Docker />
        <ColorPalette />
      </div>
      <StatusBar />
    </div>
  );
}
